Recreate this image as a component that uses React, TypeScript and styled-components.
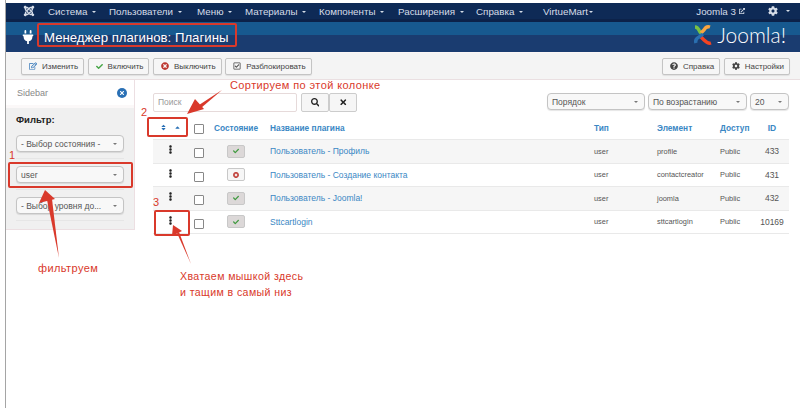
import React from "react";
import styled, { createGlobalStyle } from "styled-components";
import { FaCog, FaCheck, FaTimes, FaTimesCircle, FaSearch, FaQuestionCircle, FaPlug, FaRegEdit, FaRegCheckSquare, FaExternalLinkAlt, FaEllipsisV, FaJoomla, FaSort, FaCaretUp } from "react-icons/fa";

const GlobalStyle = createGlobalStyle`
  html, body { margin: 0; padding: 0; background: #fff; }
  body { font-family: "Liberation Sans", Arial, sans-serif; font-size: 9px; color: #333; overflow: hidden; }
`;

const Page = styled.div`
  position: relative;
  width: 800px;
  height: 408px;
  box-sizing: border-box;
  padding-top: 3px;
  border-left: 5px solid #fff;
  overflow: hidden;
  &::before {
    content: "";
    position: absolute;
    left: 0;
    top: 0;
    bottom: 0;
    width: 1px;
    background: #a5a5a5;
  }
`;

const Nav = styled.div`
  height: 19px;
  box-sizing: border-box;
  background: #0e2a56;
  border-bottom: 3px solid #0c2249;
  display: flex;
  align-items: center;
  color: #d6dde8;
  font-size: 9.8px;
  padding-left: 18px;
`;

const Caret = styled.span`
  display: inline-block;
  margin-left: 5px;
  vertical-align: middle;
  border: 2.5px solid transparent;
  border-top-color: #d6dde8;
  border-bottom: 0;
`;

const NavItem = styled.span<{ $w: number }>`
  width: ${(p) => p.$w}px;
  white-space: nowrap;
`;

const NavRight = styled.div`
  margin-left: auto;
  display: flex;
  align-items: center;
  gap: 3px;
  padding-right: 10px;
`;

const Header = styled.div`
  height: 30px;
  background: linear-gradient(#17598f 0, #17598f 13px, #1a3c70 13px);
  display: flex;
  align-items: center;
  padding-left: 16px;
  color: #fff;
`;

const Title = styled.h1`
  margin: 0 0 0 9px;
  font-size: 13.2px;
  font-weight: normal;
  color: #fff;
`;

const Logo = styled.div`
  margin: 0 0 5px auto;
  padding-right: 14px;
  display: flex;
  align-items: center;
  gap: 3px;
  font-family: Lato, "Open Sans", sans-serif;
  font-weight: 300;
  font-size: 21px;
  line-height: 22px;
  color: #fff;
`;

const Toolbar = styled.div`
  height: 28px;
  box-sizing: border-box;
  background: #f4f4f4;
  border-top: 1px solid #fbf6f6;
  border-bottom: 1px solid #eadfe1;
  display: flex;
  align-items: center;
  padding: 0 10px 0 16px;
  gap: 3.5px;
`;

const ToolButton = styled.button<{ $push?: boolean }>`
  height: 17px;
  padding: 0 5px 0 7px;
  margin-left: ${(p) => (p.$push ? "auto" : "0")};
  display: inline-flex;
  align-items: center;
  gap: 5px;
  font: 8px "Liberation Sans", Arial, sans-serif;
  color: #444;
  background: #f6f6f6;
  border: 1px solid #c4c4c4;
  border-radius: 2px;
  box-shadow: 0 1px 1px rgba(0, 0, 0, 0.08);
`;

const Main = styled.div`
  display: flex;
`;

const Sidebar = styled.aside`
  width: 130px;
  height: 150px;
  box-sizing: border-box;
  background: #f0f0f0;
  border-right: 1px solid #ecdfe2;
  border-bottom: 1px solid #ecdfe2;
`;

const SidebarHead = styled.div`
  height: 25px;
  background: #fff;
  display: flex;
  align-items: center;
  justify-content: space-between;
  padding: 0 7px 0 12px;
  color: #888;
`;

const Dots = styled.div`
  height: 3px;
  background: #fbf8f8;
`;

const CloseDot = styled.span`
  width: 10px;
  height: 10px;
  display: flex;
  align-items: center;
  justify-content: center;
  border-radius: 50%;
  background: #2a70b5;
  color: #fff;
  font-size: 6px;
`;

const FilterTitle = styled.div`
  margin: 6px 0 10px 11px;
  font-size: 9.5px;
  line-height: 11px;
  font-weight: bold;
  color: #222;
`;

const Select = styled.div<{ $w: number }>`
  width: ${(p) => p.$w}px;
  height: 17px;
  box-sizing: border-box;
  flex: none;
  display: flex;
  align-items: center;
  justify-content: space-between;
  padding: 0 6px 0 4px;
  font-size: 8.5px;
  color: #555;
  background: #f8f8f8;
  border: 1px solid #c4c4c4;
  border-radius: 4px;
  box-shadow: 0 1px 1px rgba(0, 0, 0, 0.1);
  &::after {
    content: "";
    border: 2.5px solid transparent;
    border-top-color: #777;
    border-bottom: 0;
  }
`;

const SideSelects = styled.div`
  padding-left: 11px;
`;

const SelectRow = styled.div`
  width: 108px;
  padding-bottom: 6px;
  margin-bottom: 7px;
  border-bottom: 1px solid #e6e6e6;
`;

const Content = styled.div`
  flex: 1;
  padding: 13px 11px 0 18px;
`;

const SearchRow = styled.div`
  height: 19px;
  display: flex;
  align-items: flex-start;
`;

const SearchInput = styled.div`
  width: 144px;
  height: 19px;
  box-sizing: border-box;
  padding-left: 4px;
  line-height: 17px;
  font-size: 8.5px;
  color: #999;
  background: #fff;
  border: 1px solid #e6dada;
  border-radius: 2px;
  margin-right: 4px;
`;

const IconButton = styled.button`
  width: 28px;
  height: 19px;
  padding: 0;
  display: inline-flex;
  align-items: center;
  justify-content: center;
  color: #222;
  font-size: 8.5px;
  background: #f6f6f6;
  border: 1px solid #ccc;
  border-radius: 2px;
`;

const Orders = styled.div`
  margin-left: auto;
  display: flex;
  gap: 3px;
`;

const Table = styled.div`
  margin-top: 4px;
`;

const Row = styled.div<{ $head?: boolean; $odd?: boolean }>`
  display: grid;
  grid-template-columns: 34px 27px 56px 324px 63px 63px 40px 24px;
  align-items: center;
  height: ${(p) => (p.$head ? 24 : 23.5)}px;
  box-sizing: border-box;
  background: ${(p) => (p.$odd ? "#f6f6f6" : "#fff")};
  border-bottom: 1px solid #e9e9e9;
  color: ${(p) => (p.$head ? "#3a87c4" : "#555")};
  font-weight: ${(p) => (p.$head ? "bold" : "normal")};
  font-size: ${(p) => (p.$head ? 8.3 : 7.4)}px;
`;

const SortIcons = styled.span`
  display: flex;
  justify-content: center;
  align-items: center;
  gap: 7px;
  color: #2a70b5;
  font-size: 7px;
`;

const Handle = styled.span`
  display: flex;
  justify-content: center;
  margin-bottom: 3px;
  color: #222;
  font-size: 9px;
`;

const Check = styled.span<{ $low?: boolean }>`
  width: 8px;
  height: 8px;
  display: block;
  margin-left: 7px;
  margin-top: ${(p) => (p.$low ? 4 : 2)}px;
  background: #fff;
  border: 1px solid #888;
  border-radius: 1px;
`;

const Status = styled.span<{ $on: boolean }>`
  width: 18px;
  height: 13px;
  margin-left: 13px;
  display: flex;
  align-items: center;
  justify-content: center;
  box-sizing: border-box;
  font-size: 6px;
  color: ${(p) => (p.$on ? "#3f9a3f" : "#bd362f")};
  background: ${(p) => (p.$on ? "#dcd8d8" : "#f6f6f6")};
  border: 1px solid #c8c8c8;
  border-radius: 2px;
`;

const PluginLink = styled.span`
  color: #3a87c4;
  font-size: 8.5px;
`;

const IdCell = styled.span`
  font-size: 8.5px;
  text-align: center;
`;

const Note = styled.div<{ $x: number; $y: number; $size?: number }>`
  position: absolute;
  left: ${(p) => p.$x}px;
  top: ${(p) => p.$y}px;
  color: #d9392b;
  font-family: "Liberation Sans", Arial, sans-serif;
  font-size: ${(p) => p.$size || 10.6}px;
  letter-spacing: 0.4px;
  line-height: 16px;
  white-space: nowrap;
`;

const Frame = styled.div<{ $x: number; $y: number; $w: number; $h: number }>`
  position: absolute;
  left: ${(p) => p.$x}px;
  top: ${(p) => p.$y}px;
  width: ${(p) => p.$w}px;
  height: ${(p) => p.$h}px;
  box-sizing: border-box;
  border: 2px solid #d9392b;
  border-radius: 2px;
`;

const Arrows = styled.svg`
  position: absolute;
  left: -5px;
  top: 0;
`;

const rows = [
  { name: "Пользователь - Профиль", on: true, el: "profile", id: "433" },
  { name: "Пользователь - Создание контакта", on: false, el: "contactcreator", id: "431" },
  { name: "Пользователь - Joomla!", on: true, el: "joomla", id: "432" },
  { name: "Sttcartlogin", on: true, el: "sttcartlogin", id: "10169" },
];

const navItems: [string, number][] = [
  ["Система", 61], ["Пользователи", 88], ["Меню", 48], ["Материалы", 74], ["Компоненты", 79],
  ["Расширения", 78], ["Справка", 67],
];

const App = () => {
  return (
    <Page>
      <GlobalStyle />
      <Nav>
        <FaJoomla size={12} style={{ marginRight: 13 }} />
        {navItems.map(([t, w]) => <NavItem key={t} $w={w}>{t}<Caret /></NavItem>)}
        <NavItem $w={70}>VirtueMart<Caret style={{ marginLeft: 1 }} /></NavItem>
        <NavRight>
          Joomla 3 <FaExternalLinkAlt size={6} />
          <FaCog size={10} style={{ marginLeft: 20 }} />
          <Caret />
        </NavRight>
      </Nav>
      <Header>
        <FaPlug size={14} />
        <Title>Менеджер плагинов: Плагины</Title>
        <Logo>
          <svg width="21" height="22" viewBox="0 0 21 22">
            <path d="M2 3c3 0 4 3 5 5l2 2" fill="none" stroke="#7ac143" strokeWidth="3.4" />
            <path d="M17 3c-3-1-5 1-6 3L8 9" fill="none" stroke="#f9a541" strokeWidth="3.4" />
            <path d="M18 19c-3 1-5-1-7-3l-3-3" fill="none" stroke="#f44321" strokeWidth="3.4" />
            <path d="M3 19c-1-3 1-5 3-6l4-3" fill="none" stroke="#2a6fb0" strokeWidth="3.4" />
          </svg>
          Joomla!
        </Logo>
      </Header>
      <Toolbar>
        <ToolButton><FaRegEdit color="#2a70b5" size={8} />Изменить</ToolButton>
        <ToolButton><FaCheck color="#46a546" size={7} />Включить</ToolButton>
        <ToolButton><FaTimesCircle color="#bd362f" size={8} />Выключить</ToolButton>
        <ToolButton><FaRegCheckSquare size={8} />Разблокировать</ToolButton>
        <ToolButton $push><FaQuestionCircle size={8} />Справка</ToolButton>
        <ToolButton><FaCog size={8} />Настройки</ToolButton>
      </Toolbar>
      <Main>
        <Sidebar>
          <SidebarHead>Sidebar<CloseDot><FaTimes /></CloseDot></SidebarHead>
          <Dots />
          <FilterTitle>Фильтр:</FilterTitle>
          <SideSelects>
            <SelectRow><Select $w={108}>- Выбор состояния -</Select></SelectRow>
            <SelectRow><Select $w={108}>user</Select></SelectRow>
            <SelectRow><Select $w={108}>- Выбор уровня до...</Select></SelectRow>
          </SideSelects>
        </Sidebar>
        <Content>
          <SearchRow>
            <SearchInput>Поиск</SearchInput>
            <IconButton><FaSearch /></IconButton>
            <IconButton><FaTimes /></IconButton>
            <Orders>
              <Select $w={98}>Порядок</Select>
              <Select $w={99}>По возрастанию</Select>
              <Select $w={39}>20</Select>
            </Orders>
          </SearchRow>
          <Table>
            <Row $head>
              <SortIcons><FaSort /><FaCaretUp /></SortIcons>
              <Check />
              <span>Состояние</span>
              <span>Название плагина</span>
              <span>Тип</span>
              <span>Элемент</span>
              <span>Доступ</span>
              <IdCell>ID</IdCell>
            </Row>
            {rows.map((r, i) => (
              <Row key={r.id} $odd={i % 2 === 0}>
                <Handle><FaEllipsisV /></Handle>
                <Check $low />
                <Status $on={r.on}>{r.on ? <FaCheck /> : <FaTimesCircle />}</Status>
                <PluginLink>{r.name}</PluginLink>
                <span>user</span>
                <span>{r.el}</span>
                <span>Public</span>
                <IdCell>{r.id}</IdCell>
              </Row>
            ))}
          </Table>
        </Content>
      </Main>
      <Frame $x={32} $y={23} $w={200} $h={24} />
      <Frame $x={3} $y={162} $w={125} $h={26} />
      <Frame $x={142} $y={117} $w={41} $h={20} />
      <Frame $x={149} $y={210} $w={36} $h={26} />
      <Note $x={225} $y={77} $size={11}>Сортируем по этой колонке</Note>
      <Note $x={136} $y={104} $size={11}>2</Note>
      <Note $x={4} $y={147} $size={11}>1</Note>
      <Note $x={148} $y={194} $size={11}>3</Note>
      <Note $x={33} $y={260} $size={11}>фильтруем</Note>
      <Note $x={175} $y={268}>Хватаем мышкой здесь</Note>
      <Note $x={175} $y={284}>и тащим в самый низ</Note>
      <Arrows width="800" height="408" viewBox="0 0 800 408">
        <path d="M222 90L199 105L201 108Z" fill="#d9392b" />
        <path d="M187 114L204 109L195 99Z" fill="#d9392b" />
        <path d="M59 258L47 200L52 199Z" fill="#d9392b" />
        <path d="M45 190L39 203L55 199Z" fill="#d9392b" />
        <path d="M191 264L177 233L179 232Z" fill="#d9392b" />
        <path d="M173 225L172 236L182 231Z" fill="#d9392b" />
      </Arrows>
    </Page>
  );
};

export default App;
